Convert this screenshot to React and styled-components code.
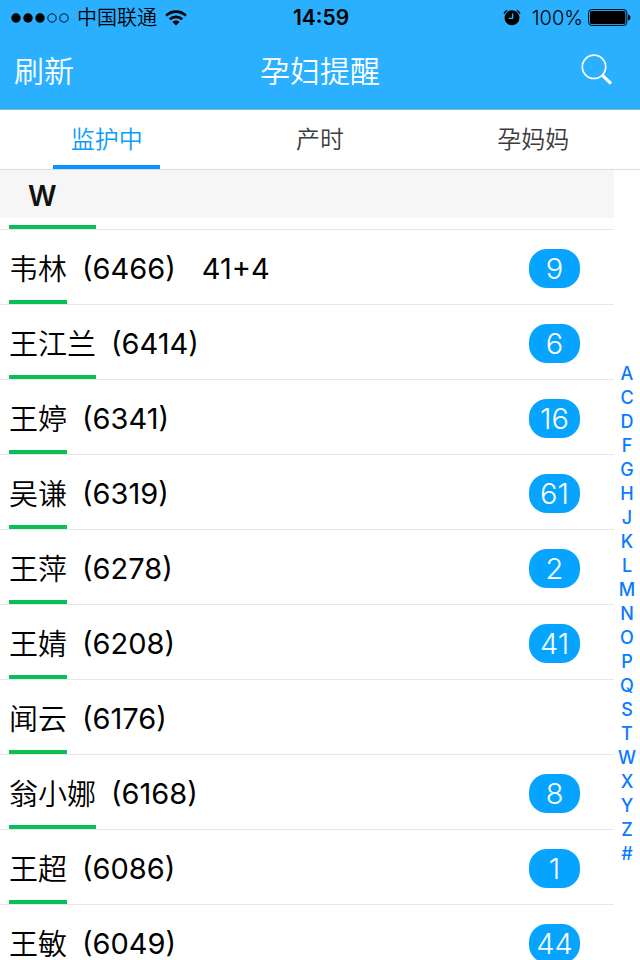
import React, { useState } from 'react';
import styled, { createGlobalStyle } from 'styled-components';

const GlobalStyle = createGlobalStyle`
  * {
    box-sizing: border-box;
  }

  body {
    margin: 0;
    background: #fff;
    font-family: Inter, 'Noto Sans CJK SC', sans-serif;
  }

  button {
    margin: 0;
    padding: 0;
    border: none;
    background: none;
    color: inherit;
    font: inherit;
    cursor: pointer;
  }
`;

const Screen = styled.div`
  display: flex;
  flex-direction: column;
  height: 100vh;
  overflow: hidden;
`;

const Header = styled.header`
  background: #2ab0ff;
  border-bottom: 1px solid #8fb4cc;
`;

const StatusBar = styled.div`
  display: grid;
  grid-template-columns: 1fr auto 1fr;
  align-items: center;
  height: 35px;
  padding: 0 9px 0 11px;
  font-size: 20px;
  line-height: 24px;
  color: #000;
`;

const StatusGroup = styled.div`
  display: flex;
  align-items: center;
  justify-content: ${(props) => (props.$end ? 'flex-end' : 'flex-start')};
  gap: ${(props) => (props.$end ? '5px' : '8px')};
  font-weight: 350;
`;

const Time = styled.time`
  font-size: 21px;
  font-weight: 600;
`;

const AlarmIcon = styled.svg`
  margin-right: 6px;
`;

const NavBar = styled.div`
  display: grid;
  grid-template-columns: 1fr auto 1fr;
  align-items: center;
  height: 74px;
  padding: 0 27px 2px 14px;
  color: #fff;
  font-size: 30px;
  line-height: 40px;
  font-weight: 350;
`;

const NavButton = styled.button`
  display: flex;
  justify-self: ${(props) => (props.$end ? 'end' : 'start')};
`;

const NavTitle = styled.h1`
  margin: 0;
  padding-left: 13px;
  font-size: 30px;
  font-weight: 350;
`;

const Tabs = styled.div`
  display: flex;
  flex: none;
  height: 60px;
  border-bottom: 1px solid #dcdcdc;
`;

const Tab = styled.button`
  display: flex;
  flex: 1;
  flex-direction: column;
  align-items: center;
  justify-content: flex-end;
  overflow: hidden;
  font-size: 24px;
  font-weight: 350;
  line-height: 50px;
  color: ${(props) => (props.$active ? '#0a9dfc' : '#3c3c3c')};

  &::after {
    content: '';
    width: 50%;
    height: 4px;
    background: ${(props) => (props.$active ? '#0a94ff' : 'transparent')};
  }
`;

const Content = styled.main`
  display: flex;
  flex: 1;
  min-height: 0;
`;

const List = styled.section`
  flex: 1;
  overflow: hidden;
`;

const SectionTitle = styled.h2`
  margin: 0;
  padding: 1px 28px 0;
  height: 48px;
  background: #f6f6f6;
  color: #111;
  font-size: 28px;
  font-weight: 600;
  line-height: 50px;
`;

const Rows = styled.ul`
  margin: 0;
  padding: 0;
  list-style: none;
`;

const Row = styled.li`
  display: flex;
  justify-content: space-between;
  height: ${(props) => (props.$partial ? '12px' : '75px')};
  padding: 0 34px 0 9px;
  border-bottom: 1px solid #e8e8e8;
  overflow: hidden;
  align-items: ${(props) => (props.$partial ? 'flex-end' : 'stretch')};
`;

const Patient = styled.div`
  display: flex;
  font-size: 29px;
  line-height: 78px;
  color: #000;
`;

const Name = styled.span`
  height: 74px;
  border-bottom: 4px solid #0abf53;
  font-weight: 350;
  line-height: 80px;
`;

const Detail = styled.span`
  margin-left: 15px;
`;

const Week = styled.span`
  margin-left: 26px;
`;

const NameLine = styled.span`
  width: 87px;
  height: 4px;
  background: #0abf53;
`;

const Badge = styled.span`
  align-self: center;
  width: 51px;
  height: 39px;
  margin-top: 2px;
  border-radius: 18px;
  background: #06a4ff;
  color: #fff;
  font-size: 29px;
  font-weight: 300;
  line-height: 40px;
  text-align: center;
`;

const Index = styled.nav`
  display: flex;
  flex-direction: column;
  align-items: center;
  justify-content: center;
  width: 26px;
  padding-top: 98px;
`;

const IndexLink = styled.a`
  color: #0a7aff;
  font-size: 18px;
  font-weight: 500;
  line-height: 24px;
  text-decoration: none;
`;

const tabs = ['监护中', '产时', '孕妈妈'];

const patients = [
  { name: '韦林', id: '6466', week: '41+4', count: 9 },
  { name: '王江兰', id: '6414', count: 6 },
  { name: '王婷', id: '6341', count: 16 },
  { name: '吴谦', id: '6319', count: 61 },
  { name: '王萍', id: '6278', count: 2 },
  { name: '王婧', id: '6208', count: 41 },
  { name: '闻云', id: '6176' },
  { name: '翁小娜', id: '6168', count: 8 },
  { name: '王超', id: '6086', count: 1 },
  { name: '王敏', id: '6049', count: 44 },
];

const letters = 'ACDFGHJKLMNOPQSTWXYZ#'.split('');

function Signal() {
  return (
    <svg width="58" height="10" viewBox="0 0 58 10">
      <circle cx="5" cy="5" r="4.7" />
      <circle cx="17" cy="5" r="4.7" />
      <circle cx="29" cy="5" r="4.7" />
      <circle cx="41" cy="5" r="4.2" fill="none" stroke="#000" strokeWidth="0.9" />
      <circle cx="53" cy="5" r="4.2" fill="none" stroke="#000" strokeWidth="0.9" />
    </svg>
  );
}

function Wifi() {
  return (
    <svg width="22" height="16" viewBox="0 0 22 16" fill="none" stroke="#000" strokeWidth="2.6">
      <path d="M1.2 5.6a14 14 0 0 1 19.6 0" />
      <path d="M4.8 9.4a8.8 8.8 0 0 1 12.4 0" />
      <path d="M11 15.6L7.4 12a5.2 5.2 0 0 1 7.2 0z" fill="#000" stroke="none" />
    </svg>
  );
}

function Alarm() {
  return (
    <AlarmIcon width="18" height="17" viewBox="0 0 18 17">
      <circle cx="9" cy="8.8" r="7.5" />
      <path d="M1 4.6A8 8 0 0 1 4.2 1.2M17 4.6a8 8 0 0 0-3.2-3.4" fill="none" stroke="#000" strokeWidth="1.3" />
      <path d="M9.6 4.4v5H5.6" fill="none" stroke="#2ab0ff" strokeWidth="1.4" />
    </AlarmIcon>
  );
}

function Battery() {
  return (
    <svg width="43" height="17" viewBox="0 0 43 17">
      <rect x="0.6" y="0.6" width="38.2" height="15.8" rx="3" fill="none" stroke="#000" strokeWidth="1" />
      <rect x="2" y="2" width="35.4" height="13" rx="1.6" />
      <path d="M40 5.4c1.8.5 2.4 1.6 2.4 3.1s-.6 2.6-2.4 3.1z" />
    </svg>
  );
}

function SearchIcon() {
  return (
    <svg width="32" height="34" viewBox="0 0 32 34" fill="none" stroke="#fff">
      <circle cx="13" cy="12.8" r="11.7" strokeWidth="1.7" />
      <path d="M21 20.8l9 8.8" strokeWidth="3.2" />
    </svg>
  );
}

function PatientRow({ patient }) {
  const { name, id, week, count } = patient;
  return (
    <Row>
      <Patient>
        <Name>{name}</Name>
        <Detail>({id})</Detail>
        {week && <Week>{week}</Week>}
      </Patient>
      {count && <Badge>{count}</Badge>}
    </Row>
  );
}

export default function App() {
  const [active, setActive] = useState(0);

  return (
    <Screen lang="zh-CN">
      <GlobalStyle />
      <Header>
        <StatusBar>
          <StatusGroup>
            <Signal />
            <span>中国联通</span>
            <Wifi />
          </StatusGroup>
          <Time>14:59</Time>
          <StatusGroup $end>
            <Alarm />
            <span>100%</span>
            <Battery />
          </StatusGroup>
        </StatusBar>
        <NavBar>
          <NavButton>刷新</NavButton>
          <NavTitle>孕妇提醒</NavTitle>
          <NavButton $end aria-label="搜索">
            <SearchIcon />
          </NavButton>
        </NavBar>
      </Header>
      <Tabs role="tablist">
        {tabs.map((tab, i) => (
          <Tab
            key={tab}
            role="tab"
            aria-selected={i === active}
            $active={i === active}
            onClick={() => setActive(i)}
          >
            {tab}
          </Tab>
        ))}
      </Tabs>
      <Content>
        <List>
          <SectionTitle id="W">W</SectionTitle>
          <Rows>
            <Row $partial>
              <NameLine />
            </Row>
            {patients.map((patient) => (
              <PatientRow key={patient.id} patient={patient} />
            ))}
          </Rows>
        </List>
        <Index>
          {letters.map((letter) => (
            <IndexLink key={letter} href={`#${letter}`}>
              {letter}
            </IndexLink>
          ))}
        </Index>
      </Content>
    </Screen>
  );
}
